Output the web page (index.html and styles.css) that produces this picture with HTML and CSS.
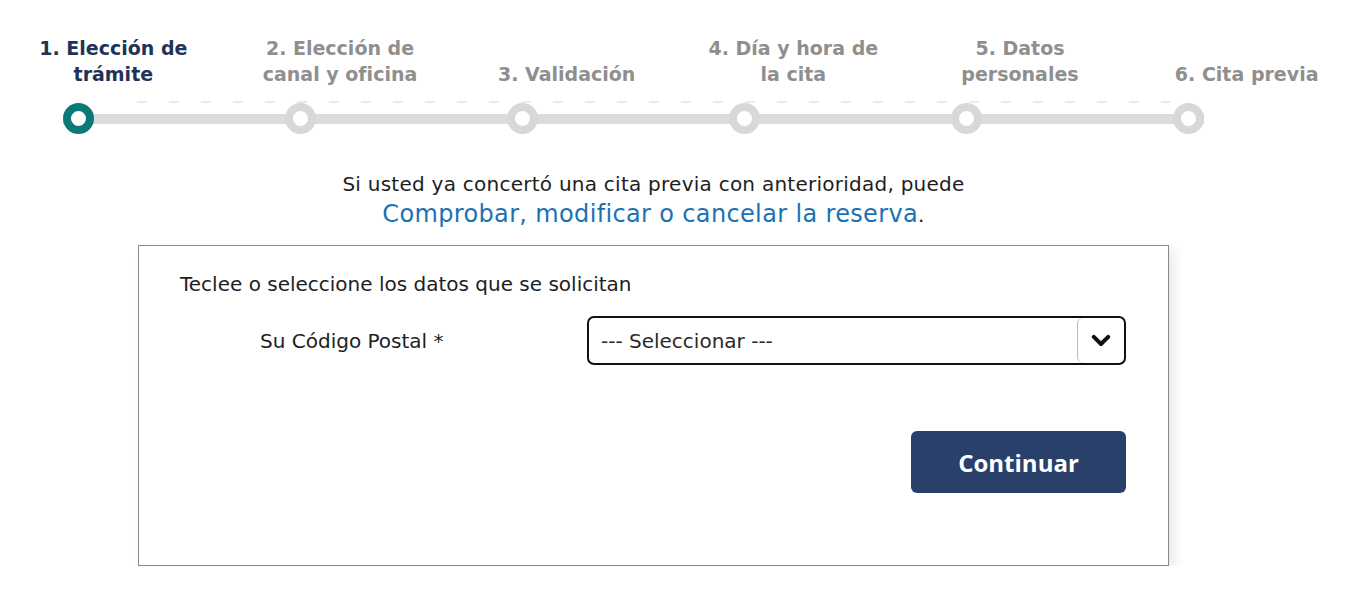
FILE: index.html
```html
<!DOCTYPE html>
<html lang="es">
<head>
<meta charset="utf-8">
<title>Cita previa</title>
<link rel="stylesheet" href="styles.css">
</head>
<body>
<div class="steps">
  <div class="labels">
    <div class="label active">1. Elección de<br>trámite</div>
    <div class="label">2. Elección de<br>canal y oficina</div>
    <div class="label">3. Validación</div>
    <div class="label">4. Día y hora de<br>la cita</div>
    <div class="label">5. Datos<br>personales</div>
    <div class="label">6. Cita previa</div>
  </div>
  <div class="dashes"></div>
  <div class="track">
    <span class="dot active"></span>
    <span class="dot"></span>
    <span class="dot"></span>
    <span class="dot"></span>
    <span class="dot"></span>
    <span class="dot"></span>
  </div>
</div>

<main class="content">
  <p class="intro">Si usted ya concertó una cita previa con anterioridad, puede<br>
    <a class="link" href="#">Comprobar, modificar o cancelar la reserva</a>.</p>

  <section class="card">
    <p class="card-title">Teclee o seleccione los datos que se solicitan</p>
    <div class="form-row">
      <label class="field-label">Su Código Postal *</label>
      <div class="select">
        <span class="select-text">--- Seleccionar ---</span>
        <span class="select-btn">
          <svg width="20" height="13" viewBox="0 0 20 13"><path d="M2.8 2.8 L10 10 L17.2 2.8" fill="none" stroke="#111" stroke-width="4" stroke-linecap="round" stroke-linejoin="round"/></svg>
        </span>
      </div>
    </div>
    <div class="actions">
      <button class="btn" type="button">Continuar</button>
    </div>
  </section>
</main>
</body>
</html>
```

FILE: styles.css
```css
* { box-sizing: border-box; }
body {
  margin: 0;
  background: #fff;
  font-family: "DejaVu Sans", "Open Sans", sans-serif;
  color: #1e1e1e;
}
.steps {
  padding-top: 35px;
}
.labels {
  display: grid;
  grid-template-columns: repeat(6, 1fr);
  align-items: end;
}
.label {
  text-align: center;
  font-weight: bold;
  font-size: 19px;
  line-height: 26px;
  color: #8f8f8f;
}
.label.active { color: #1f3357; }
.dashes {
  height: 2px;
  margin: 14px 190px 0 137px;
  background: repeating-linear-gradient(90deg, #ebebeb 0 10px, transparent 10px 32px);
}
.track {
  margin: 0 156px 0 63px;
  height: 31px;
  display: flex;
  justify-content: space-between;
  background: linear-gradient(#dcdcdc, #dcdcdc) center / 100% 10px no-repeat;
}
.dot {
  width: 31px;
  height: 31px;
  border-radius: 50%;
  border: 8px solid #d8d8d8;
  background: #fff;
}
.dot.active { border-color: #0b7a77; }

.content {
  width: 1031px;
  margin: 0 0 0 138px;
}
.intro {
  margin: 35px 0 0;
  text-align: center;
  font-size: 20px;
  letter-spacing: 0.25px;
  line-height: 30px;
  color: #1e1e1e;
}
.link {
  color: #1a72b5;
  font-size: 24px;
  letter-spacing: 0.35px;
  text-decoration: none;
}
.card {
  margin-top: 15px;
  height: 321px;
  border: 1px solid #8a8a8a;
  box-shadow: 6px 4px 10px rgba(0,0,0,0.08);
  padding: 26px 42px 0 41px;
}
.card-title {
  margin: 0;
  font-size: 20px;
  line-height: 24px;
}
.form-row {
  margin-top: 20px;
  display: grid;
  grid-template-columns: 407px 539px;
  align-items: center;
}
.field-label {
  padding-left: 80px;
  font-size: 20px;
}
.select {
  height: 49px;
  border: 2px solid #111;
  border-radius: 7px;
  display: flex;
  align-items: stretch;
}
.select-text {
  flex: 1;
  display: flex;
  align-items: center;
  padding-left: 12px;
  font-size: 20px;
  color: #2a2a2a;
}
.select-btn {
  width: 47px;
  border-left: 1px solid #bbb;
  border-radius: 6px 0 0 6px;
  display: flex;
  align-items: center;
  justify-content: center;
}
.actions {
  margin-top: 66px;
  display: flex;
  justify-content: flex-end;
}
.btn {
  width: 215px;
  height: 62px;
  border: none;
  border-radius: 6px;
  background: #29416a;
  color: #fff;
  font-family: "Open Sans", sans-serif;
  font-weight: bold;
  font-size: 24px;
}
```
